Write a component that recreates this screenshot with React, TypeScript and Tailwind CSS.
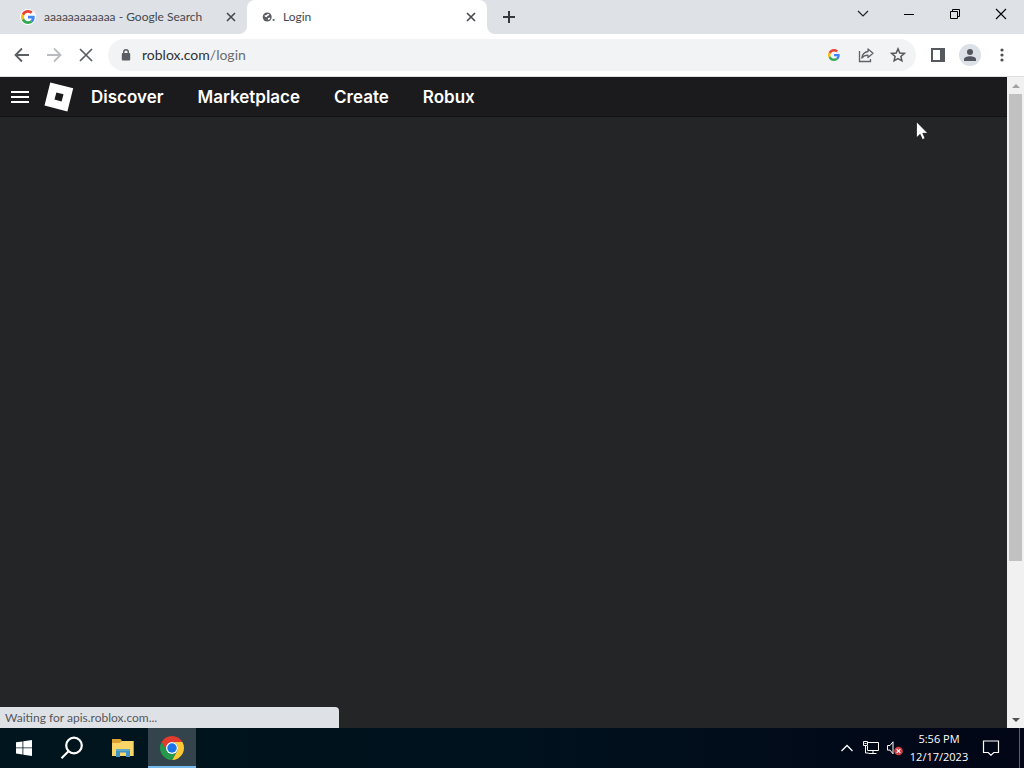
import type { ReactNode } from "react";

function GoogleG({ className }: { className?: string }) {
  return (
    <svg viewBox="0 0 48 48" className={className} aria-hidden="true">
      <path fill="#EA4335" d="M24 9.5c3.54 0 6.71 1.22 9.21 3.6l6.85-6.85C35.9 2.38 30.47 0 24 0 14.62 0 6.51 5.38 2.56 13.22l7.98 6.19C12.43 13.72 17.74 9.5 24 9.5z" />
      <path fill="#4285F4" d="M46.98 24.55c0-1.57-.15-3.09-.38-4.55H24v9.02h12.94c-.58 2.96-2.26 5.48-4.78 7.18l7.73 6c4.51-4.18 7.09-10.36 7.09-17.65z" />
      <path fill="#FBBC05" d="M10.53 28.59c-.48-1.45-.76-2.99-.76-4.59s.27-3.14.76-4.59l-7.98-6.19C.92 16.46 0 20.12 0 24c0 3.88.92 7.54 2.56 10.78l7.97-6.19z" />
      <path fill="#34A853" d="M24 48c6.48 0 11.93-2.13 15.89-5.81l-7.73-6c-2.15 1.45-4.92 2.3-8.16 2.3-6.26 0-11.57-4.22-13.47-9.91l-7.98 6.19C6.51 42.62 14.62 48 24 48z" />
    </svg>
  );
}

function IconButton({ label, className, children }: { label: string; className: string; children: ReactNode }) {
  return (
    <button type="button" aria-label={label} className={`flex shrink-0 items-center justify-center ${className}`}>
      {children}
    </button>
  );
}

function CloseGlyph() {
  return (
    <svg viewBox="0 0 10 10" className="size-2.5" fill="none" stroke="#45484c" strokeWidth="1.6" aria-hidden="true">
      <path d="M1 1l8 8M9 1L1 9" />
    </svg>
  );
}

function TabStrip() {
  return (
    <div className="flex h-[34px] shrink-0 bg-[#dee1e6] text-xs text-[#45484c]">
      <div className="flex w-[239px] items-center pl-5">
        <span className="flex size-4 items-center justify-center rounded-full bg-white">
          <GoogleG className="size-3.5" />
        </span>
        <a href="#search" className="ml-2 flex-1 truncate">aaaaaaaaaaaa - Google Search</a>
        <IconButton label="Close search tab" className="h-6 w-4"><CloseGlyph /></IconButton>
      </div>
      <span className="size-2 self-end bg-white"><span className="block size-2 rounded-br-lg bg-[#dee1e6]" /></span>
      <div className="flex w-60 items-center rounded-t-lg bg-white pr-2 pl-3.5">
        <svg viewBox="0 0 16 16" className="size-4" aria-hidden="true">
          <circle cx="6.2" cy="8" r="4.5" fill="#5a5d61" />
          <path d="M3.4 6.4l2-.5 1.5-1.2 1.5.8-.8 1.1-1.2.4-.7 1.3-1.6-.5zM6.8 9.2l2.2-.8.3.8-1.4 1.7-1-.5z" fill="#fff" />
          <rect x="11.7" y="10" width="1.8" height="1.8" fill="#5a5d61" />
        </svg>
        <a href="#login" className="ml-[6px] flex-1 truncate">Login</a>
        <IconButton label="Close login tab" className="h-6 w-4"><CloseGlyph /></IconButton>
      </div>
      <span className="size-2 self-end bg-white"><span className="block size-2 rounded-bl-lg bg-[#dee1e6]" /></span>
      <IconButton label="New tab" className="w-7">
        <svg viewBox="0 0 12 12" className="size-3" stroke="#35383c" strokeWidth="2" aria-hidden="true"><path d="M6 0v12M0 6h12" /></svg>
      </IconButton>
      <div className="ml-auto flex h-7">
        <IconButton label="Search tabs" className="w-[46px]">
          <svg viewBox="0 0 12 8" className="h-2 w-3" fill="none" stroke="#202124" strokeWidth="1.2" aria-hidden="true"><path d="M1 1l5 5 5-5" /></svg>
        </IconButton>
        <IconButton label="Minimize" className="w-[46px]">
          <svg viewBox="0 0 10 10" className="size-2.5" fill="#000" aria-hidden="true"><path d="M0 5h10v1H0z" /></svg>
        </IconButton>
        <IconButton label="Restore" className="w-[46px]">
          <svg viewBox="0 0 10 10" className="size-2.5" fill="none" stroke="#000" aria-hidden="true"><path d="M.5 2.5h7v7h-7zM2.5 2.5v-2h7v7h-2" /></svg>
        </IconButton>
        <IconButton label="Close window" className="w-[46px]">
          <svg viewBox="0 0 12 12" className="size-3" fill="none" stroke="#000" strokeWidth="1.1" aria-hidden="true"><path d="M1 1l10 10M11 1L1 11" /></svg>
        </IconButton>
      </div>
    </div>
  );
}

function Toolbar() {
  return (
    <div className="flex h-[43px] shrink-0 items-center border-b border-[#dcdee1] bg-white pr-1.5 pl-1.5">
      <IconButton label="Back" className="size-8">
        <svg viewBox="0 0 16 16" className="size-4" fill="none" stroke="#5a5d61" strokeWidth="1.8" aria-hidden="true"><path d="M15 8H2M8 1.5L1.5 8 8 14.5" /></svg>
      </IconButton>
      <IconButton label="Forward" className="size-8">
        <svg viewBox="0 0 16 16" className="size-4" fill="none" stroke="#b9bbbe" strokeWidth="1.8" aria-hidden="true"><path d="M1 8h13M8 1.5L14.5 8 8 14.5" /></svg>
      </IconButton>
      <IconButton label="Stop" className="size-8">
        <svg viewBox="0 0 14 14" className="size-3.5" fill="none" stroke="#5a5d61" strokeWidth="1.7" aria-hidden="true"><path d="M1 1l12 12M13 1L1 13" /></svg>
      </IconButton>
      <div className="ml-1.5 flex h-8 flex-1 items-center rounded-full bg-[#f1f3f4] pr-0.5 pl-3">
        <svg viewBox="0 0 12 14" className="h-3.5 w-3" aria-hidden="true">
          <path d="M3.7 6V4a2.3 2.3 0 014.6 0v2" fill="none" stroke="#5a5d61" strokeWidth="1.4" />
          <rect x="1.8" y="5" width="8.4" height="7.6" rx="1" fill="#5a5d61" />
        </svg>
        <a href="#address" className="ml-2.5 flex-1 text-sm text-[#303236]">
          roblox.com<span className="text-[#6a6d71]">/login</span>
        </a>
        <IconButton label="Search with Google" className="size-8"><GoogleG className="size-3" /></IconButton>
        <IconButton label="Share this page" className="size-8">
          <svg viewBox="0 0 16 16" className="size-4" fill="none" stroke="#5f6368" strokeWidth="1.3" aria-hidden="true">
            <path d="M1.5 4v10.5h11V12" />
            <path d="M10 2l5 4.3-5 4.2V8.2C7.3 8.2 5.3 9 3.8 11c.5-3.5 2.6-6 6.2-6.5z" strokeLinejoin="round" />
          </svg>
        </IconButton>
        <IconButton label="Bookmark this tab" className="size-8">
          <svg viewBox="0 0 16 16" className="size-4" fill="none" stroke="#55585c" strokeWidth="1.5" aria-hidden="true">
            <path d="M8 1.9l1.8 4.1 4.5.4-3.4 3 1 4.4L8 11.5l-3.9 2.3 1-4.4-3.4-3 4.5-.4z" />
          </svg>
        </IconButton>
      </div>
      <IconButton label="Side panel" className="ml-1.5 size-8">
        <svg viewBox="0 0 14 14" className="size-3.5" aria-hidden="true"><path fillRule="evenodd" fill="#55585c" d="M0 0h14v14H0zM2 2v10h7V2z" /></svg>
      </IconButton>
      <IconButton label="Profile" className="size-8">
        <svg viewBox="0 0 22 22" className="size-[22px]" aria-hidden="true">
          <circle cx="11" cy="11" r="11" fill="#dce0e7" />
          <g fill="#52555d"><circle cx="11" cy="8" r="3" /><path d="M5 17v-1.8c0-2 3-3 6-3s6 1 6 3V17z" /></g>
        </svg>
      </IconButton>
      <IconButton label="Chrome menu" className="size-8">
        <svg viewBox="0 0 4 14" className="h-3.5 w-1" fill="#4d5054" aria-hidden="true"><circle cx="2" cy="2" r="1.6" /><circle cx="2" cy="7" r="1.6" /><circle cx="2" cy="12" r="1.6" /></svg>
      </IconButton>
    </div>
  );
}

function Page() {
  return (
    <div className="relative flex min-h-0 flex-1">
      <main className="min-w-0 flex-1 bg-[#232527]">
        <header className="flex h-10 items-center border-b border-[#111213] bg-[#1b1b1d] pl-2.5 text-white">
          <IconButton label="Open navigation" className="h-8 w-5">
            <svg viewBox="0 0 20 14" className="h-3.5 w-5" fill="#fff" aria-hidden="true"><path d="M1 1h18v2H1zM1 6h18v2H1zM1 11h18v2H1z" /></svg>
          </IconButton>
          <a href="#home" aria-label="Roblox" className="ml-3.5">
            <svg viewBox="0 0 30 30" className="size-[30px]" aria-hidden="true"><path fillRule="evenodd" fill="#fff" d="M6.3 0.5L29.2 6.3 23.4 29.5 0.5 23.4zM12.4 10.4l-1.9 7.2 7.1 1.9 1.9-7.2z" /></svg>
          </a>
          <nav className="ml-[17px] flex gap-[34px] font-['Inter',sans-serif] text-[17px] leading-6 font-semibold">
            <a href="#discover">Discover</a>
            <a href="#marketplace">Marketplace</a>
            <a href="#create">Create</a>
            <a href="#robux">Robux</a>
          </nav>
        </header>
      </main>
      <div className="flex w-[17px] shrink-0 flex-col bg-[#f1f1f1]">
        <IconButton label="Scroll up" className="h-[17px]">
          <svg viewBox="0 0 8 4" className="h-1 w-2" fill="#a3a3a3" aria-hidden="true"><path d="M4 0l4 4H0z" /></svg>
        </IconButton>
        <div className="flex flex-1 justify-center"><div className="h-[75.7%] w-[13px] bg-[#c1c1c1]" /></div>
        <IconButton label="Scroll down" className="h-[17px]">
          <svg viewBox="0 0 8 4" className="h-1 w-2" fill="#505050" aria-hidden="true"><path d="M0 0h8L4 4z" /></svg>
        </IconButton>
      </div>
      <div role="status" className="absolute bottom-0 left-0 w-[339px] rounded-tr-[4px] bg-[#dee1e6] px-[5px] py-0.5 text-xs leading-[17px] text-[#55585c]">
        Waiting for apis.roblox.com...
      </div>
      <svg viewBox="0 0 12 19" className="absolute top-11 right-24 h-[19px] w-3" aria-hidden="true">
        <path d="M.5.8v15.9l3.6-3.4 2.3 5.2 2.7-1.1-2.3-5.1h5z" fill="#fff" stroke="#000" strokeWidth=".6" />
      </svg>
    </div>
  );
}

function Taskbar() {
  return (
    <footer className="flex h-10 shrink-0 bg-linear-to-r from-[#00151e] via-[#00121d] to-[#020617] text-white">
      <IconButton label="Start" className="w-12">
        <svg viewBox="0 0 16 16" className="size-4" fill="#fff" aria-hidden="true"><path d="M0 2.3l6.5-.9v6.1H0zM7.3 1.3L16 0v7.5H7.3zM0 8.3h6.5v6.2L0 13.6zM7.3 8.3H16V16l-8.7-1.3z" /></svg>
      </IconButton>
      <IconButton label="Search" className="w-12">
        <svg viewBox="0 0 24 24" className="size-6" fill="none" stroke="#fff" strokeWidth="2.2" aria-hidden="true"><circle cx="14" cy="9.5" r="7.8" /><path d="M8.5 15.3L1.5 22.3" /></svg>
      </IconButton>
      <IconButton label="File Explorer" className="w-[52px] pl-0.5">
        <svg viewBox="0 0 22 20" className="h-5 w-[22px]" aria-hidden="true">
          <path d="M0 1h8.5L10 3h11.5v15H0z" fill="#dca22f" />
          <path d="M0 5h8l2-2h11.5v15H0z" fill="#fad568" />
          <path d="M4 11h14v8h-4v-4.5H8V19H4z" fill="#3f93c5" />
          <path d="M4 11h14v2H4z" fill="#62a9c6" />
        </svg>
      </IconButton>
      <IconButton label="Google Chrome" className="w-12 border-b-2 border-[#76b9ed] bg-[#33444c]">
        <svg viewBox="0 0 48 48" className="mt-0.5 size-6" aria-hidden="true">
          <path d="M24 12h20.78A24 24 0 003.22 12l10.39 18A12 12 0 0124 12z" fill="#e33b2e" />
          <path d="M34.39 30L24 48a24 24 0 0020.78-36H24a12 12 0 0110.39 18z" fill="#fcc934" />
          <path d="M13.61 30L3.22 12A24 24 0 0024 48l10.39-18a12 12 0 01-20.78 0z" fill="#24994b" />
          <circle cx="24" cy="24" r="12" fill="#fff" />
          <circle cx="24" cy="24" r="9.5" fill="#1a73e8" />
        </svg>
      </IconButton>
      <div className="ml-auto flex items-center">
        <IconButton label="Show hidden icons" className="h-10 w-6">
          <svg viewBox="0 0 12 8" className="h-2 w-3" fill="none" stroke="#fff" strokeWidth="1.3" aria-hidden="true"><path d="M.5 7L6 1.5 11.5 7" /></svg>
        </IconButton>
        <IconButton label="Network" className="h-10 w-6">
          <svg viewBox="0 0 16 14" className="h-3.5 w-4" fill="none" stroke="#fff" strokeWidth="1" aria-hidden="true">
            <path d="M5 1.5h10.5v8h-11V5M10 9.5v3M5.5 12.5h8M.5.5h4v4h-4zM2.5 4.5v7.5h3M1.5 2.5h2" />
          </svg>
        </IconButton>
        <IconButton label="Volume muted" className="h-10 w-6">
          <svg viewBox="0 0 18 16" className="h-4 w-[18px]" aria-hidden="true">
            <path d="M1.5 5.5H4l3-3.7v12l-3-3.7H1.5z" fill="none" stroke="#fff" />
            <circle cx="12.5" cy="11" r="4.3" fill="#d63d42" />
            <path d="M10.7 9.2l3.6 3.6M14.3 9.2l-3.6 3.6" stroke="#fff" strokeWidth="1.2" />
          </svg>
        </IconButton>
        <button type="button" className="w-16 text-center font-['Open_Sans',sans-serif] text-[11px] leading-[18px]">
          <time className="block">5:56 PM</time>
          <time className="block">12/17/2023</time>
        </button>
        <IconButton label="Notifications" className="h-10 w-10">
          <svg viewBox="0 0 18 16" className="h-4 w-[18px]" fill="none" stroke="#fff" strokeWidth="1.2" aria-hidden="true"><path d="M1.5 1h15v11.5h-4.7L9 15.2l-2.8-2.7H1.5z" /></svg>
        </IconButton>
        <IconButton label="Show desktop" className="ml-2 h-10 w-[5px] border-l border-[#59616b]">{null}</IconButton>
      </div>
    </footer>
  );
}

export default function App() {
  return (
    <div className="flex h-screen flex-col overflow-hidden font-['Lato','Open_Sans',sans-serif]">
      <TabStrip />
      <Toolbar />
      <Page />
      <Taskbar />
    </div>
  );
}
